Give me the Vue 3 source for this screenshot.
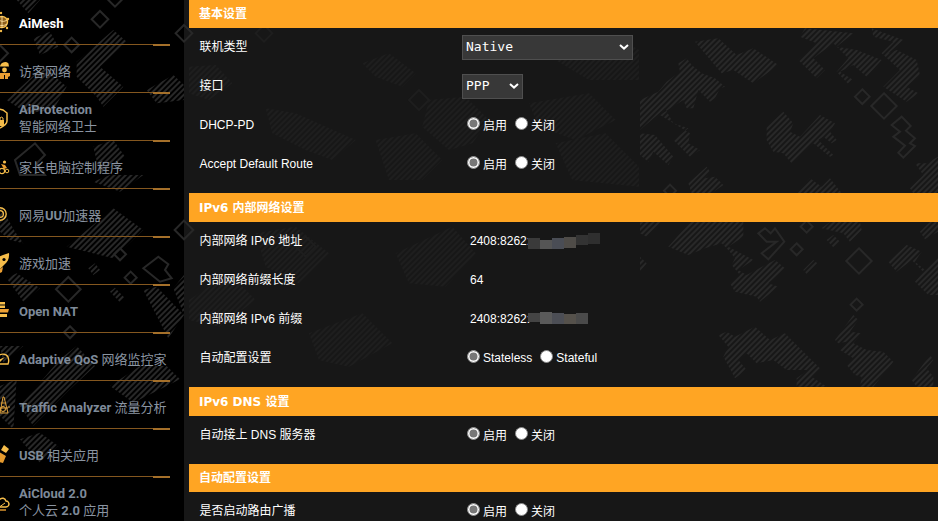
<script setup>
const patches = [
  { t: 'translate(640 0) scale(.3333)', dim: false, polys: [
    '165,125 235,115 290,165 340,145 415,195 340,250 280,210 245,220',
    '495,85 640,100 590,140 650,150 725,180 680,230 640,195 600,215 640,240 625,252 590,215 625,175 580,130 520,175 555,210 530,235 475,180 530,130 480,110',
    '695,85 790,120 745,160 770,150 830,180 840,225 800,260 835,280 800,305 730,260 780,210 725,160 760,125 700,110',
    '115,190 140,175 155,195 185,220 225,235 255,260 240,265 225,295 210,305 175,270 160,325 140,325 130,300 60,345 150,400 145,430 180,450 150,470 100,420 145,385 100,370 75,325 0,390 0,300 55,275 80,245 120,215',
    '0,400 45,405 100,470 85,495 40,455 25,485 0,465',
    '380,380 430,335 460,370 450,395 480,410 540,345 585,370 570,395 590,420 575,430 550,410 535,420 580,465 570,470 520,430 455,490 430,460 400,455 380,420',
    '145,550 200,500 210,515 195,535 225,530 250,555 215,580 155,580',
    '470,580 510,535 545,560 570,535 605,580',
    '810,565 850,525 825,490 860,490 894,470 894,580 820,580'
  ], diamonds: [[667,290,22],[732,318,38],[90,572,18]], blobs: ['755,375 785,350 812,378 798,392 825,415 810,430 825,438 790,473 775,458 795,437 760,410 780,395'] },
  { t: 'translate(640 200) scale(.3333)', dim: false, polys: [
    '85,140 150,66 310,66 310,110 265,140 340,180 295,210 320,225 405,180 435,205 385,250 415,260 360,305 350,290 285,275 270,250 300,225 275,195 285,175 265,150 245,130 195,145 145,165',
    '0,66 65,66 20,110 0,100',
    '545,85 570,66 660,66 665,90 630,125 610,100',
    '560,120 580,105 600,125 580,142',
    '490,210 520,180 532,190 500,222',
    '745,185 800,135 845,155 825,185 855,210 894,170 894,285 865,285 825,245 850,215 815,180 770,215',
    '840,95 870,66 894,66 894,95 855,118',
    '0,170 20,190 0,215',
    '235,405 260,395 285,410 345,380 390,420 435,400 475,440 540,505 515,530 560,560 470,560 470,535 505,510 440,510 400,480 350,490 320,460 295,480 320,510 285,535 275,515 250,470 265,440',
    '585,420 640,345 655,360 630,395 665,400 640,430 680,450 730,455 760,485 700,560 660,560 665,530 645,525 620,495 640,475 600,450 620,425 595,430',
    '815,540 870,465 880,480 860,505 880,530 880,560 830,560'
  ], diamonds: [[500,80,18],[470,148,18],[657,183,38],[650,314,18]], blobs: ['355,100 375,85 392,100 405,85 433,125 385,178 365,160 410,125 380,125'] },
  { t: 'translate(189 0) scale(.3333)', dim: true, polys: [
    '0,200 80,195 130,250 60,300 0,280',
    '230,325 320,340 500,420 430,480 350,450 250,400',
    '520,190 600,160 680,220 640,260 560,230',
    '720,300 830,290 900,360 850,430 780,450 700,380',
    '1020,310 1200,280 1280,360 1160,420 1050,380',
    '1100,180 1300,120 1350,150 1350,240 1200,240',
    '560,420 680,400 760,480 700,540 600,540',
    '1100,430 1250,400 1350,500 1350,560 1150,540',
    '200,700 320,680 420,760 330,850 230,800',
    '620,760 790,680 860,760 770,860 660,850',
    '0,900 120,820 200,900 90,980 0,960',
    '360,1000 520,940 610,1030 480,1100 390,1080'
  ], diamonds: [[225,100,25],[690,300,30],[350,740,30]], blobs: [] },
  { t: 'translate(0 0) scale(.3333)', dim: false, polys: [
    '50,0 120,0 85,40',
    '100,115 150,95 175,140 120,165',
    '230,185 340,90 380,125 300,200 370,260 310,320 290,290 230,230',
    '20,300 130,200 200,260 160,330 80,340',
    '280,440 340,420 375,470 300,525',
    '440,270 520,225 552,255 552,300 470,310'
  ], diamonds: [[300,58,25],[215,135,22],[345,0,20],[552,100,25],[0,160,24]], blobs: ['45,480 105,430 135,465 110,490 135,525 60,525'] },
  { t: 'translate(0 175) scale(.3333)', dim: false, polys: [
    '0,90 45,170 70,205 30,195 0,170',
    '200,215 340,100 430,165 340,250 300,240',
    '20,310 50,295 120,340 70,380',
    '430,345 470,335 552,420 505,490',
    '280,20 330,0 430,0 360,50',
    '265,280 285,265 300,285 280,300',
    '330,350 345,338 375,370 360,382',
    '520,340 552,300 552,420'
  ], diamonds: [[360,238,18],[392,308,18],[205,343,37],[210,472,18],[552,165,28]], blobs: ['430,280 475,245 505,268 495,285 515,310 480,320'] },
  { t: 'translate(0 346) scale(.3333)', dim: false, polys: [
    '180,40 230,0 285,60 210,130 100,240 60,180',
    '330,120 420,60 500,60 540,100 400,170',
    '0,120 50,100 40,250 0,210',
    '60,280 120,260 175,300 120,350',
    '0,0 70,0 10,50'
  ], diamonds: [], blobs: [] }
]

function diamond(d) {
  const [x, y, r] = d
  return `${x},${y - r} ${x + r},${y} ${x},${y + r} ${x - r},${y}`
}

// Latin runs are bold in the menu, Chinese runs are regular.
function runs(line) {
  return line.match(/[\u4e00-\u9fff]+|[^\u4e00-\u9fff]+/g).map((s) => ({
    s,
    cjk: /[\u4e00-\u9fff]/.test(s)
  }))
}

const nav = [
  { id: 'mesh', lines: ['AiMesh'], on: true },
  { id: 'guest', lines: ['访客网络'] },
  { id: 'shield', lines: ['AiProtection', '智能网络卫士'] },
  { id: 'family', lines: ['家长电脑控制程序'] },
  { id: 'uu', lines: ['网易UU加速器'] },
  { id: 'rocket', lines: ['游戏加速'] },
  { id: 'nat', lines: ['Open NAT'] },
  { id: 'qos', lines: ['Adaptive QoS 网络监控家'] },
  { id: 'traffic', lines: ['Traffic Analyzer 流量分析'] },
  { id: 'usb', lines: ['USB 相关应用'] },
  { id: 'cloud', lines: ['AiCloud 2.0', '个人云 2.0 应用'] }
]

const onOff = ['启用', '关闭']
// [left, top, height, colour] of the redaction mosaic, relative to its row
const blur1 = [
  [339, 16, 11, '#3a3a3a'], [351, 18, 9, '#555'], [363, 16, 11, '#4a4d55'],
  [375, 15, 11, '#4f4c48'], [387, 13, 10, '#333'], [399, 11, 11, '#2f2f2f']
]
const blur2 = [
  [339, 13, 9, '#444'], [351, 12, 12, '#5a5a5a'], [363, 13, 11, '#4c4e55'],
  [375, 14, 10, '#55514b'], [387, 13, 11, '#4a4a4a']
]
const sections = [
  { title: '基本设置', rows: [
    { label: '联机类型', select: 'Native', wide: true },
    { label: '接口', select: 'PPP' },
    { label: 'DHCP-PD', radios: onOff },
    { label: 'Accept Default Route', radios: onOff }
  ] },
  { title: 'IPv6 内部网络设置', tall: true, rows: [
    { label: '内部网络 IPv6 地址', text: '2408:8262:', blur: blur1 },
    { label: '内部网络前缀长度', text: '64' },
    { label: '内部网络 IPv6 前缀', text: '2408:8262:', blur: blur2 },
    { label: '自动配置设置', radios: ['Stateless', 'Stateful'] }
  ] },
  { title: 'IPv6 DNS 设置', tall: true, rows: [
    { label: '自动接上 DNS 服务器', radios: onOff }
  ] },
  { title: '自动配置设置', rows: [
    { label: '是否启动路由广播', radios: onOff }
  ] }
]
</script>

<template>
  <div class="page">
    <svg class="camo" width="938" height="521" aria-hidden="true">
      <defs>
        <pattern id="st" width="12" height="12" patternUnits="userSpaceOnUse" patternTransform="rotate(-45)">
          <rect width="12" height="6" fill="#282828" />
        </pattern>
        <pattern id="st2" width="12" height="12" patternUnits="userSpaceOnUse" patternTransform="rotate(-45)">
          <rect width="12" height="6" fill="#1e1e1e" />
        </pattern>
      </defs>
      <g v-for="(p, i) in patches" :key="i" :transform="p.t">
        <polygon v-for="(q, j) in p.polys" :key="j" :points="q" :fill="p.dim ? 'url(#st2)' : 'url(#st)'" />
        <polygon v-for="(d, j) in p.diamonds" :key="'d' + j" :points="diamond(d)" fill="none" :stroke="p.dim ? '#1e1e1e' : '#282828'" stroke-width="6" />
        <polygon v-for="(b, j) in p.blobs" :key="'b' + j" :points="b" fill="none" :stroke="p.dim ? '#1e1e1e' : '#282828'" stroke-width="6" />
      </g>
    </svg>

    <aside class="nav">
      <div v-for="n in nav" :key="n.id" class="item">
        <svg class="ico" viewBox="0 0 12 24" width="12" height="24" aria-hidden="true">
          <g v-if="n.id === 'mesh'">
            <circle cx="2" cy="11" r="5.5" fill="#8a5d1c" stroke="#f6bd4a" stroke-width="1.4" />
            <path d="M-2 8c3 3 6 3 9 1M-3 13c3 2 7 2 10 0M2 5v12" fill="none" stroke="#ffe2a0" stroke-width=".9" />
            <circle cx="8" cy="8" r="1.2" fill="#f6bd4a" />
            <circle cx="7" cy="17" r="1.2" fill="#f6bd4a" />
            <circle cx="1" cy="2" r="1.2" fill="#f6bd4a" />
            <circle cx="1" cy="20" r="1.2" fill="#f6bd4a" />
          </g>
          <g v-else-if="n.id === 'guest'">
            <path d="M0 8a5 5 0 0 1 8.5-3.5L9 8z" fill="#f6bd4a" />
            <path d="M0 8h9" stroke="#000" stroke-width="1" />
            <circle cx="4.5" cy="11" r="2.4" fill="#f6bd4a" />
            <path d="M-1 14h11v3l-2 1v2h-3v-4h-1v4H0v-2z" fill="#ec9f32" />
          </g>
          <g v-else-if="n.id === 'shield'">
            <path d="M-1 2l4 1 4 3v8c0 3-3 5-7 7" fill="none" stroke="#f6bd4a" stroke-width="1.5" />
            <path d="M0 13h4v6H0z" fill="#f6bd4a" />
            <path d="M0 13v-2a2 2 0 0 1 3 0v2" fill="none" stroke="#f6bd4a" stroke-width="1" />
          </g>
          <g v-else-if="n.id === 'family'">
            <circle cx="4.5" cy="7" r="1.6" fill="#f6bd4a" />
            <path d="M1 9l4 1 2 3-3 1z" fill="#ec9f32" />
            <circle cx="2" cy="16" r="2.6" fill="none" stroke="#f6bd4a" stroke-width="1.1" />
            <circle cx="7" cy="16" r="1.8" fill="none" stroke="#f6bd4a" stroke-width="1" />
          </g>
          <g v-else-if="n.id === 'uu'" fill="none" stroke="#f6bd4a">
            <circle cx="0" cy="11" r="6.2" stroke-width="1.4" />
            <circle cx="0" cy="11" r="3.4" stroke-width="1.3" />
          </g>
          <g v-else-if="n.id === 'rocket'">
            <path d="M9 2c.5 5-1 9-5 12l-4 4-2-2V6l5-2z" fill="#f6bd4a" />
            <circle cx="4" cy="8.5" r="1.6" fill="#000" />
            <path d="M0 18l3-2-1 5-2 1z" fill="#ec9f32" />
          </g>
          <g v-else-if="n.id === 'nat'" fill="#f6bd4a">
            <rect x="-1" y="3" width="6" height="2.5" />
            <rect x="-1" y="6.5" width="6" height="2.5" />
            <path d="M-1 10h10l-1 3.5H-1z" fill="#ec9f32" />
            <rect x="-1" y="15" width="8" height="3" />
          </g>
          <g v-else-if="n.id === 'qos'">
            <path d="M-3 17V11C-1 6 6 6 8 10c1 3 1 5 0 7z" fill="none" stroke="#f6bd4a" stroke-width="1.4" />
            <path d="M-2 13l7-3-5 5z" fill="#f6bd4a" />
          </g>
          <g v-else-if="n.id === 'traffic'" fill="none" stroke="#e0a23c" stroke-width="1">
            <path d="M3 2L0 18h8L4 2z" />
            <path d="M0 13h8M1 8h4" />
            <circle cx="3" cy="14" r="2.5" />
            <path d="M8 12h2" />
          </g>
          <g v-else-if="n.id === 'usb'">
            <path d="M4 2l5 4-3 4-5-3z" fill="#f6bd4a" />
            <path d="M-1 9l7 4-3 7-4-1z" fill="#e59a2e" />
            <path d="M3 10l3 2" stroke="#000" stroke-width="1" />
          </g>
          <g v-else fill="none" stroke="#f6bd4a" stroke-width="1.4">
            <path d="M-1 9c3-3 6-2 7 1 2 0 3 2 3 3s-1 3-3 3H-1" />
            <path d="M-2 17l7-5" stroke-width="1" />
            <path d="M-1 19h7" stroke="#ec9f32" />
          </g>
        </svg>
        <div class="txt" :class="{ on: n.on, two: n.lines.length > 1 }">
          <div v-for="l in n.lines" :key="l">
            <span v-for="(r, i) in runs(l)" :key="i" :class="{ cjk: r.cjk }">{{ r.s }}</span>
          </div>
        </div>
      </div>
    </aside>

    <main class="main">
      <section v-for="s in sections" :key="s.title" class="sec">
        <h2 class="head" :class="{ tall: s.tall }">{{ s.title }}</h2>
        <div v-for="r in s.rows" :key="r.label" class="row">
          <div class="lab">{{ r.label }}</div>
          <div class="val">
            <div v-if="r.select" class="sel" :class="{ wide: r.wide }">
              <select class="native">
                <option>{{ r.select }}</option>
              </select>
              <svg class="chev" viewBox="0 0 10 6" width="10" height="6" aria-hidden="true">
                <path d="M1 1l4 3.6L9 1" fill="none" stroke="#fff" stroke-width="2" />
              </svg>
            </div>
            <div v-else-if="r.radios" class="radios">
              <label v-for="(o, i) in r.radios" :key="o" class="opt">
                <input type="radio" :name="r.label" :checked="i === 0" class="rad" />
                <span>{{ o }}</span>
              </label>
            </div>
            <div v-else class="plain">{{ r.text }}</div>
          </div>
          <i
            v-for="(b, i) in r.blur || []"
            :key="i"
            class="mos"
            :style="{ left: b[0] + 'px', top: b[1] + 'px', height: b[2] + 'px', background: b[3] }"
          ></i>
        </div>
      </section>
    </main>
  </div>
</template>

<style>
html, body { margin: 0; background: #000; }
</style>

<style scoped>
.page {
  position: relative;
  width: 938px;
  height: 521px;
  overflow: hidden;
  display: flex;
  background: linear-gradient(to right, #000 184px, #171717 184px);
  font-family: "Liberation Sans", "Noto Sans CJK SC", sans-serif;
  font-size: 12px;
  color: #fff;
}
.camo { position: absolute; inset: 0; }
.nav {
  position: relative;
  width: 170px;
  margin-right: 19px;
  margin-top: -3px;
  flex: none;
}
.item {
  position: relative;
  box-sizing: border-box;
  height: 48px;
  padding-top: 5px;
  display: flex;
  align-items: center;
  gap: 7px;
  border-bottom: 1px solid #84571f;
}
.item::after {
  content: "";
  position: absolute;
  right: 0;
  bottom: -2px;
  width: 17px;
  height: 2px;
  background: #a5702a;
}
.ico { flex: none; display: block; }
.txt {
  font-family: Roboto, "Noto Sans CJK SC", sans-serif;
  font-size: 13px;
  font-weight: 700;
  color: #7e8a99;
  line-height: 17px;
  white-space: nowrap;
}
.txt.two { margin-top: -2px; }
.txt.on { color: #fff; }
.cjk { font-weight: 400; color: #8a94a1; }
.main { position: relative; flex: 1; min-width: 0; }
.sec { margin-bottom: 9px; }
.head {
  margin: 0;
  height: 28px;
  box-sizing: border-box;
  padding: 0 10px 3px;
  display: flex;
  align-items: center;
  background: #ffa523;
  font-family: "DejaVu Sans", "Noto Sans CJK SC", sans-serif;
  font-size: 12px;
  font-weight: 700;
  color: #fff;
}
.head.tall { height: 29px; padding-bottom: 2px; }
.row {
  position: relative;
  display: grid;
  grid-template-columns: 273px 1fr;
  align-items: center;
  height: 39px;
}
.lab { padding-left: 10.5px; padding-bottom: 2px; line-height: 16px; }
.sel {
  position: relative;
  width: 61px;
  height: 25px;
}
.sel.wide { width: 171px; }
.native {
  appearance: none;
  display: block;
  width: 100%;
  height: 100%;
  box-sizing: border-box;
  margin: 0;
  padding: 0 0 2px 3px;
  background: #383838;
  border: 1px solid #4f4f4f;
  border-radius: 0;
  color: #fff;
  font-family: "DejaVu Sans Mono", monospace;
  font-size: 13px;
}
.chev { position: absolute; right: 4px; top: 9px; pointer-events: none; }
.radios { display: flex; gap: 8px; padding-left: 5px; padding-bottom: 2px; }
.opt { display: flex; align-items: center; gap: 3px; }
.rad {
  appearance: none;
  box-sizing: border-box;
  width: 13px;
  height: 13px;
  margin: 0 0 2px;
  border-radius: 50%;
  background: #fff;
  border: 1px solid #8a8a8a;
}
.rad:checked {
  background: #777;
  border: 1px solid #999;
  box-shadow: inset 0 0 0 1.5px #fff;
}
.plain { padding-left: 8px; padding-bottom: 2px; line-height: 16px; }
.mos { position: absolute; width: 12px; }
</style>
